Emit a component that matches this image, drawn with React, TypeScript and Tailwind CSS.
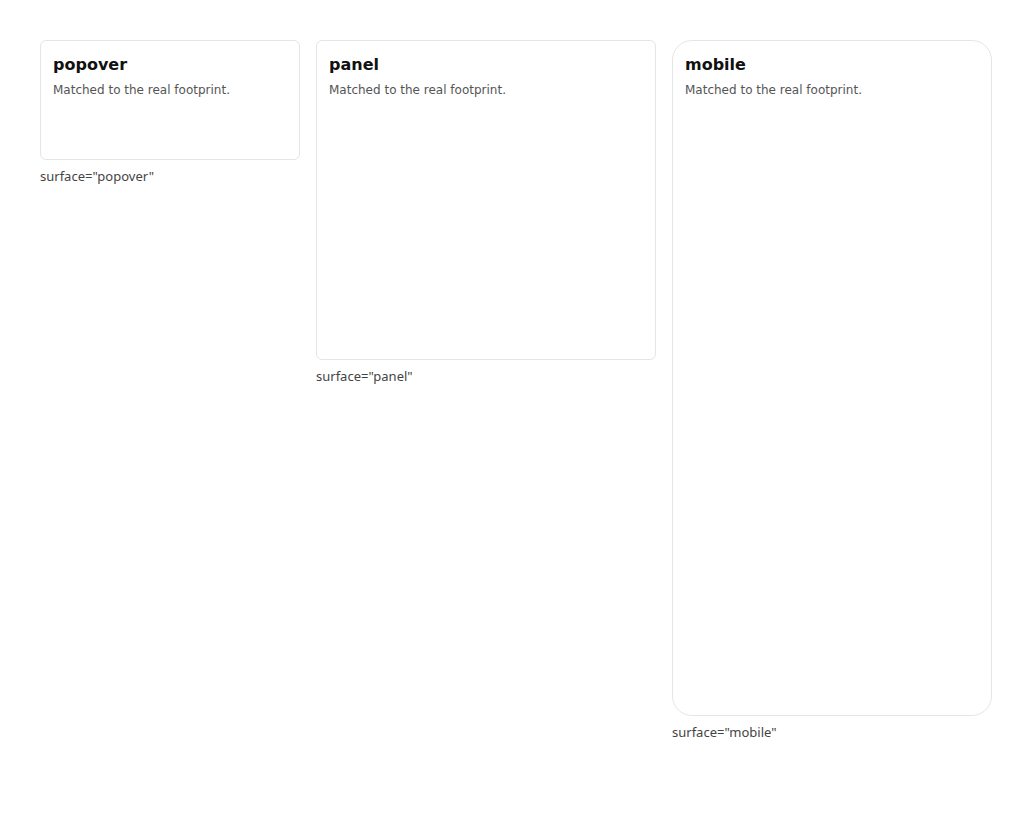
const surfaces = [
  { name: 'popover', box: 'w-[260px] h-[120px] rounded-md' },
  { name: 'panel', box: 'w-[340px] h-[320px] rounded-md' },
  { name: 'mobile', box: 'w-[320px] h-[676px] rounded-[20px]' },
];

export default function App() {
  return (
    <div className="min-h-screen bg-white p-10 font-['DejaVu_Sans',sans-serif]">
      <div className="flex items-start gap-4">
        {surfaces.map((s) => (
          <div key={s.name} className="flex flex-col gap-2">
            <div className={`border border-[#e5e5e5] bg-white p-3 ${s.box}`}>
              <h3 className="text-base leading-6 font-bold text-[#111]">{s.name}</h3>
              <p className="mt-[5px] text-xs leading-4 text-[#555]">Matched to the real footprint.</p>
            </div>
            <span className="text-[13px] leading-4 text-[#444] font-['Noto_Sans',sans-serif]">
              surface="{s.name}"
            </span>
          </div>
        ))}
      </div>
    </div>
  );
}
